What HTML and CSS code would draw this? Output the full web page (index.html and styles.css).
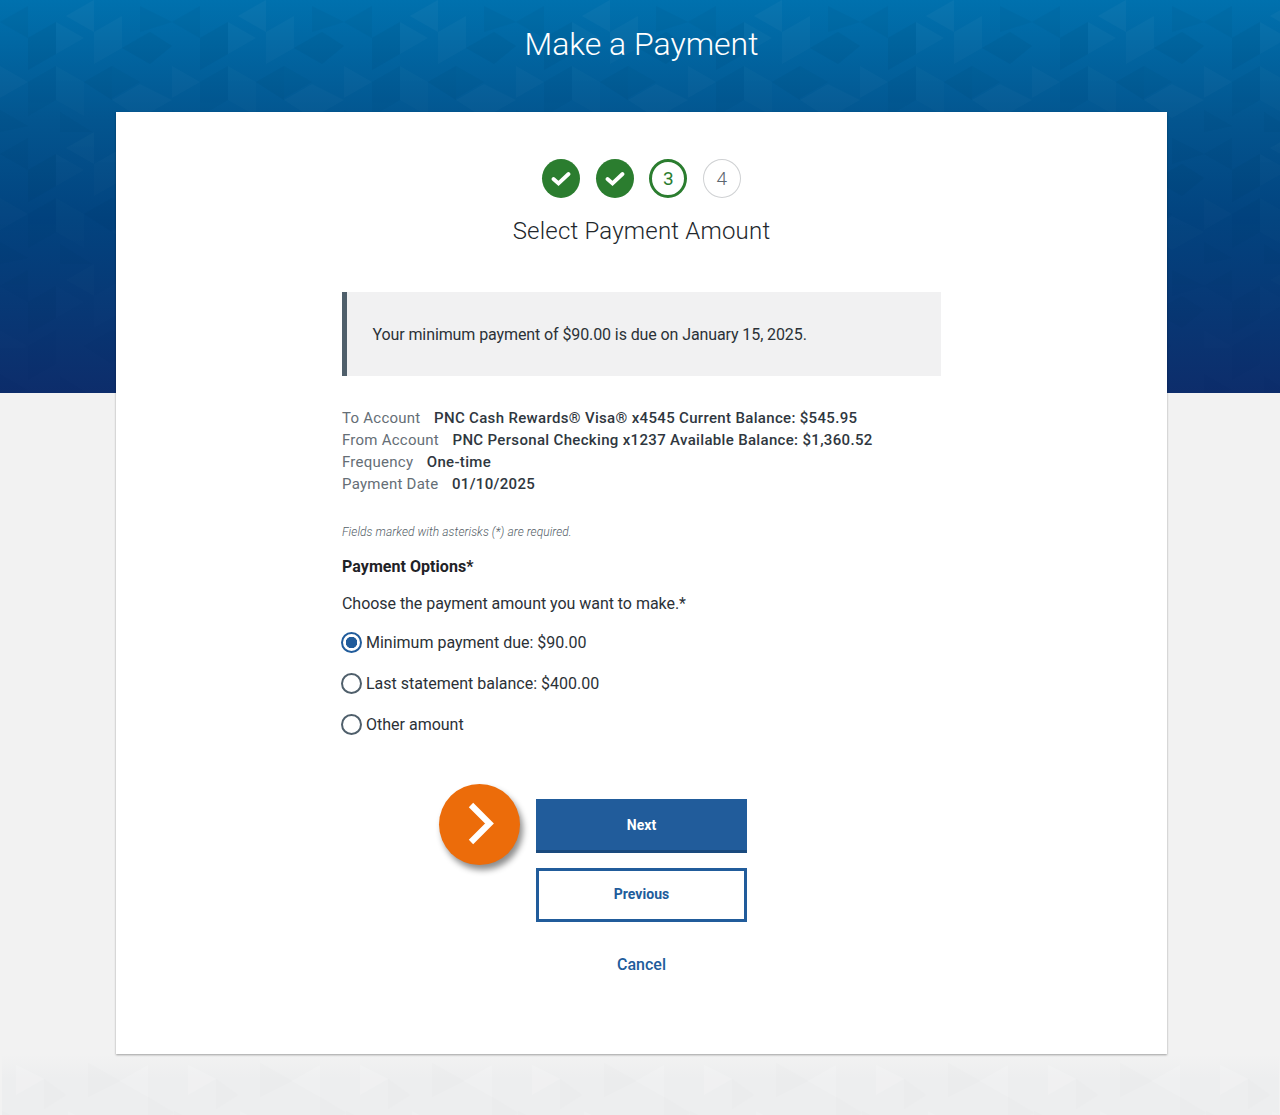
FILE: index.html
```html
<!DOCTYPE html>
<html lang="en">
<head>
<meta charset="utf-8">
<title>Make a Payment</title>
<link rel="stylesheet" href="styles.css">
</head>
<body>
<svg class="hero-bg" width="100%" height="393" aria-hidden="true">
  <defs>
    <linearGradient id="fade" x1="0" y1="0" x2="0" y2="1">
      <stop offset="0" stop-color="#fff" stop-opacity=".55"/>
      <stop offset="0.55" stop-color="#fff" stop-opacity=".28"/>
      <stop offset="1" stop-color="#fff" stop-opacity=".06"/>
    </linearGradient>
    <mask id="fadeMask"><rect width="100%" height="393" fill="url(#fade)"/></mask>
    <pattern id="tris" width="172" height="132" patternUnits="userSpaceOnUse">
      <polygon points="0,22 28,6 28,38" fill="#000" opacity=".05"/>
      <polygon points="28,38 56,22 56,54 28,70" fill="#000" opacity=".07"/>
      <polygon points="56,22 84,38 56,54" fill="#fff" opacity=".05"/>
      <polygon points="66,16 94,0 94,32" fill="#fff" opacity=".06"/>
      <polygon points="94,32 122,16 122,48 94,64" fill="#fff" opacity=".05"/>
      <polygon points="122,48 150,32 172,46 150,64" fill="#000" opacity=".07"/>
      <polygon points="140,6 172,22 140,32" fill="#000" opacity=".05"/>
      <polygon points="0,66 28,82 0,98" fill="#fff" opacity=".05"/>
      <polygon points="28,82 56,66 56,100 28,116" fill="#000" opacity=".05"/>
      <polygon points="56,66 84,82 84,116 56,100" fill="#fff" opacity=".04"/>
      <polygon points="84,82 112,66 112,100" fill="#000" opacity=".07"/>
      <polygon points="112,66 140,82 112,98" fill="#000" opacity=".04"/>
      <polygon points="112,100 140,84 172,100 140,118" fill="#fff" opacity=".05"/>
      <polygon points="0,110 28,126 0,132" fill="#000" opacity=".05"/>
      <polygon points="60,112 92,132 60,132" fill="#000" opacity=".05"/>
    </pattern>
    <pattern id="trisLight" width="172" height="80" patternUnits="userSpaceOnUse">
      <polygon points="14,10 42,24 14,40" fill="#fff" opacity=".14"/>
      <polygon points="42,24 64,40 42,54" fill="#000" opacity=".007"/>
      <polygon points="86,8 118,26 86,42" fill="#000" opacity=".008"/>
      <polygon points="118,26 146,10 146,42" fill="#fff" opacity=".12"/>
      <polygon points="146,42 172,58 146,72" fill="#000" opacity=".007"/>
      <polygon points="0,56 30,72 0,80" fill="#000" opacity=".007"/>
      <polygon points="66,56 98,72 66,80" fill="#fff" opacity=".1"/>
    </pattern>
  </defs>
  <rect width="100%" height="393" fill="url(#tris)" mask="url(#fadeMask)"/>
</svg>

<div class="page">
  <header class="page-header">
    <h1 class="page-title">Make a Payment</h1>
  </header>

  <main class="card">
    <ol class="stepper">
      <li class="step step-done">
        <svg width="20" height="16" viewBox="0 0 20 16"><path d="M2.5 8 7.5 12.5 17.5 3" fill="none" stroke="#fff" stroke-width="3.8" stroke-linecap="round"/></svg>
      </li>
      <li class="step step-done">
        <svg width="20" height="16" viewBox="0 0 20 16"><path d="M2.5 8 7.5 12.5 17.5 3" fill="none" stroke="#fff" stroke-width="3.8" stroke-linecap="round"/></svg>
      </li>
      <li class="step step-current">3</li>
      <li class="step step-todo">4</li>
    </ol>
    <h2 class="step-title">Select Payment Amount</h2>

    <div class="content">
      <p class="notice">Your minimum payment of $90.00 is due on January 15, 2025.</p>

      <dl class="details">
        <div class="detail"><dt>To Account</dt><dd>PNC Cash Rewards® Visa® x4545 Current Balance: $545.95</dd></div>
        <div class="detail"><dt>From Account</dt><dd>PNC Personal Checking x1237 Available Balance: $1,360.52</dd></div>
        <div class="detail"><dt>Frequency</dt><dd>One-time</dd></div>
        <div class="detail"><dt>Payment Date</dt><dd>01/10/2025</dd></div>
      </dl>

      <p class="required-note">Fields marked with asterisks (*) are required.</p>
      <h3 class="options-title">Payment Options*</h3>
      <p class="options-lead">Choose the payment amount you want to make.*</p>

      <div class="options">
        <label class="option"><span class="radio radio-on"></span>Minimum payment due: $90.00</label>
        <label class="option"><span class="radio"></span>Last statement balance: $400.00</label>
        <label class="option"><span class="radio"></span>Other amount</label>
      </div>

      <div class="actions">
        <div class="next-wrap">
          <span class="callout">
            <svg width="26" height="43" viewBox="0 0 26 43"><path d="M3 3 21.5 21.5 3 40" fill="none" stroke="#fff" stroke-width="6.2"/></svg>
          </span>
          <a class="btn btn-primary">Next</a>
        </div>
        <a class="btn btn-outline">Previous</a>
        <a class="cancel">Cancel</a>
      </div>
    </div>
  </main>

  <footer class="page-foot">
    <svg width="100%" height="60" aria-hidden="true"><rect width="100%" height="60" fill="url(#trisLight)"/></svg>
  </footer>
</div>
</body>
</html>
```
FILE: styles.css
```css
* { box-sizing: border-box; }
html, body { margin: 0; padding: 0; }
body {
  position: relative;
  height: 1115px;
  overflow: hidden;
  font-family: Roboto, "Liberation Sans", sans-serif;
  color: #2b3137;
  background-color: #f2f2f2;
  background-image: linear-gradient(#0071ae 0, #03558f 120px, #02437f 220px, #0d2d6b 393px);
  background-size: 100% 393px;
  background-repeat: no-repeat;
}
.hero-bg { position: absolute; top: 0; left: 0; display: block; }
.page { position: relative; display: flex; flex-direction: column; align-items: center; padding-left: 3px; }

.page-header { height: 112px; padding-top: 24px; }
.page-title { margin: 0; font-size: 32px; line-height: 40px; font-weight: 300; color: #fff; }

.card {
  position: relative;
  z-index: 1;
  width: 1051px;
  height: 942px;
  padding-top: 47px;
  background: #fff;
  box-shadow: 0 1px 2px rgba(0,0,0,.35);
  display: flex;
  flex-direction: column;
  align-items: center;
}

.stepper { list-style: none; display: flex; gap: 15.5px; margin: 0; padding: 0; }
.step {
  width: 38px; height: 39px; border-radius: 50%;
  display: flex; align-items: center; justify-content: center;
  font-size: 19px; font-weight: 300;
}
.step-done { background: #2b7d2f; }
.step-current { border: 3px solid #2b7d2f; color: #2b7d2f; font-weight: 400; }
.step-todo { border: 1px solid #cfd1d3; color: #5c6670; }

.step-title { margin: 15px 0 0; font-size: 24px; line-height: 36px; font-weight: 300; color: #22272c; letter-spacing: .2px; }

.content { width: 599px; margin-top: 43px; }

.notice {
  margin: 0; height: 84px; padding: 1px 0 0 25.5px;
  display: flex; align-items: center;
  background: #f1f1f2; border-left: 5.5px solid #4f5f6b;
  font-size: 16px; font-weight: 400; letter-spacing: -.1px; color: #2b3137;
}

.details { margin: 31px 0 0; }
.detail { display: flex; gap: 13.5px; height: 22px; line-height: 22px; font-size: 15px; }
.detail dt { font-weight: 400; color: #656e76; letter-spacing: .25px; }
.detail dd { margin: 0; font-weight: 500; color: #2f3740; letter-spacing: .33px; }

.required-note { margin: 29px 0 0; font-size: 12px; line-height: 16px; font-style: italic; font-weight: 300; color: #545e67; letter-spacing: .07px; }
.options-title { margin: 17px 0 0; font-size: 16px; line-height: 20px; font-weight: 700; color: #1f2327; letter-spacing: .05px; }
.options-lead { margin: 17px 0 0; font-size: 16px; line-height: 20px; font-weight: 400; color: #2b3137; letter-spacing: -.04px; }

.options { margin-top: 8px; display: flex; flex-direction: column; }
.option { display: flex; align-items: center; gap: 4px; height: 41px; margin-left: -1px; font-size: 16px; font-weight: 400; color: #2b3137; }
.radio { width: 21px; height: 21px; border-radius: 50%; border: 2.5px solid #4f5f6b; background: #fff; flex: none; }
.radio-on { border-color: #215c9b; background: radial-gradient(circle, #215c9b 0 5.5px, #fff 6px); }

.actions { margin-top: 54px; display: flex; flex-direction: column; align-items: center; }
.next-wrap { position: relative; }
.btn {
  width: 211px; height: 54px;
  display: flex; align-items: center; justify-content: center;
  font-size: 14px; font-weight: 700; letter-spacing: .05px;
}
.btn-primary { background: #215c9b; border-bottom: 3px solid #1a4a7e; color: #fff; }
.btn-outline { margin-top: 15px; padding-bottom: 2px; background: #fff; border: 3px solid #215c9b; color: #215c9b; }
.callout {
  position: absolute; left: -97px; top: -15px;
  width: 81px; height: 81px; border-radius: 50%;
  display: flex; align-items: center; justify-content: center;
  padding: 0 0 2px 3px;
  background: #ec6c0a;
  box-shadow: 3px 5px 6px rgba(0,0,0,.45);
}
.cancel { margin-top: 33px; font-size: 16px; line-height: 20px; font-weight: 500; color: #215c9b; }

.page-foot { width: 100%; height: 61px; margin-left: -3px; flex: none; padding-top: 1px; background: linear-gradient(#f2f2f2, #edeeef 40%); }
.page-foot svg { display: block; }
```
